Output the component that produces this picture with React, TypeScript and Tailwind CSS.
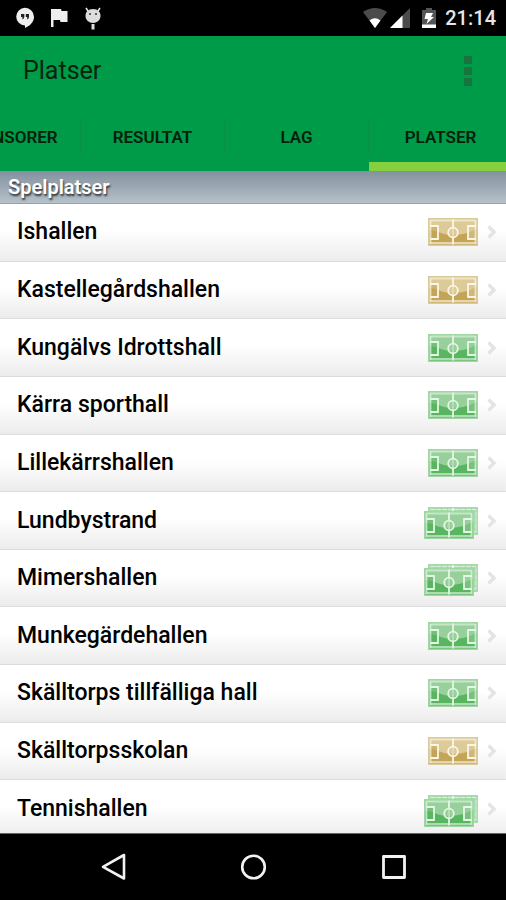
import React, { useState } from 'react';

type Surface = 'gravel' | 'grass' | 'multi';

interface Venue {
  id: number;
  name: string;
  surface: Surface;
}

const tabs = ['Sponsorer', 'Resultat', 'Lag', 'Platser'];

const venues: Venue[] = [
  { id: 1, name: 'Ishallen', surface: 'gravel' },
  { id: 2, name: 'Kastellegårdshallen', surface: 'gravel' },
  { id: 3, name: 'Kungälvs Idrottshall', surface: 'grass' },
  { id: 4, name: 'Kärra sporthall', surface: 'grass' },
  { id: 5, name: 'Lillekärrshallen', surface: 'grass' },
  { id: 6, name: 'Lundbystrand', surface: 'multi' },
  { id: 7, name: 'Mimershallen', surface: 'multi' },
  { id: 8, name: 'Munkegärdehallen', surface: 'grass' },
  { id: 9, name: 'Skälltorps tillfälliga hall', surface: 'grass' },
  { id: 10, name: 'Skälltorpsskolan', surface: 'gravel' },
  { id: 11, name: 'Tennishallen', surface: 'multi' },
];

const pitchColors = {
  gravel: { light: '#dccb98', dark: '#c4a558', edge: '#dac999', line: '#fbf6e6' },
  grass: { light: '#97d09b', dark: '#5ab561', edge: '#9fd6a3', line: '#e4f6e5' },
};

// One football pitch, 50x28
const Pitch: React.FC<{ kind: 'gravel' | 'grass' }> = ({ kind }) => {
  const c = pitchColors[kind];
  return (
    <g>
      <rect width="50" height="28" fill={c.edge} />
      <rect x="1.5" y="1.5" width="47" height="25" fill={c.light} />
      <path d="M1.5 12 C9 12 14 17 24 17 C35 17 42 14 48.5 11 V26.5 H1.5 Z" fill={c.dark} />
      <path d="M2.5 8 H10 V21 H2.5 Z" fill={c.dark} fillOpacity="0.6" />
      <path d="M40 8 H48 V21 H40 Z" fill={c.light} fillOpacity="0.5" />
      <g fill="none" stroke={c.line} strokeWidth="1.8">
        <path d="M2.5 2.5 H47.5 M2.5 25 H47.5" strokeOpacity="0.6" />
        <path d="M2.5 2 V26 M47.5 2 V26" strokeOpacity="0.7" />
        <path d="M25 1.5 V26.5 M2.5 8 H10 V21 H2.5 M48 8 H40 V21 H48" />
        <circle cx="25" cy="14.5" r="4.8" fill={c.light} fillOpacity="0.6" />
      </g>
    </g>
  );
};

const VenueIcon: React.FC<{ surface: Surface }> = ({ surface }) => {
  if (surface === 'multi') {
    return (
      <svg viewBox="0 0 54 38" className="h-[38px] w-[54px]" aria-hidden="true">
        <g transform="translate(4 5)">
          <rect width="50" height="28" fill="#a9daac" />
          <path d="M2 2.5 H48 V25 H42" fill="none" stroke="#e4f6e5" strokeOpacity="0.8" strokeDasharray="5 1" />
          <path d="M25 1 V5" stroke="#e4f6e5" strokeWidth="2" />
        </g>
        <g transform="translate(0 9)">
          <Pitch kind="grass" />
        </g>
      </svg>
    );
  }
  return (
    <svg viewBox="0 0 50 28" className="h-7 w-[50px]" aria-hidden="true">
      <Pitch kind={surface} />
    </svg>
  );
};

const StatusBar: React.FC = () => (
  <div className="flex h-9 shrink-0 items-center justify-between bg-black pl-4 pr-[10px] text-[#e6e6e6]">
    <div className="flex items-center gap-4">
      {/* Hangouts */}
      <svg viewBox="0 0 18 22" className="h-[22px] w-[18px]">
        <path d="M9 0.8 A8.8 8.8 0 0 0 9 18.4 V21 C14 19 18 15 18 9.8 A9 9 0 0 0 9 0.8 Z" fill="#eee" />
        <path d="M5 7 H8.3 V10 Q8.2 12 6.4 12.4 V10 H5 Z M9.8 7 H13 V10 Q13 12 11.2 12.4 V10 H9.8 Z" fill="#222" />
      </svg>
      <svg viewBox="0 0 18 22" className="h-[22px] w-[18px]">
        <path d="M1 2 H11 L11.6 4 H17.5 V15 H10.5 L10 13 H3.5 V20 H1 Z" fill="#eee" />
      </svg>
      {/* Debug bug */}
      <svg viewBox="0 0 18 24" className="h-6 w-[18px]">
        <path d="M4 5 L2 2 M14 5 L16 2" stroke="#eee" strokeWidth="1.5" />
        <path d="M9 3 C14 3 16.5 6 16.5 10 C16.5 14 13 17 9 17 C5 17 1.5 14 1.5 10 C1.5 6 4 3 9 3 Z" fill="#ddd" />
        <circle cx="6" cy="8" r="1" fill="#333" />
        <circle cx="12" cy="8" r="1" fill="#333" />
        <path d="M9 18 V23.5" stroke="#ddd" strokeWidth="3" />
      </svg>
    </div>
    <div className="flex items-center">
      <svg viewBox="0 0 24 20" className="h-5 w-6">
        <path d="M0 4 Q12 -4 24 4 L12 20 Z" fill="#4b4b4b" />
        <path d="M6.5 12.5 Q12 8 17.5 12.5 L12 20 Z" fill="#fff" />
      </svg>
      <svg viewBox="0 0 20 20" className="ml-[3px] h-5 w-5">
        <path d="M20 0 V20 H0 Z" fill="#4b4b4b" />
        <path d="M12.5 7.5 V20 H0 Z" fill="#fff" />
      </svg>
      <svg viewBox="0 0 14 20" className="ml-3 h-5 w-[14px]">
        <path d="M4 0 H10 V2 H14 V20 H0 V2 H4 Z" fill="#555" />
        <path d="M0 16.5 H14 V20 H0 Z" fill="#fff" />
        <path d="M4 5 H11 L9 9 H12 L4.5 16 L6 11 H2.5 Z" fill="#fff" />
      </svg>
      <span className="ml-[9px] text-xl font-medium leading-6">21:14</span>
    </div>
  </div>
);

const App: React.FC = () => {
  const [activeTab, setActiveTab] = useState('Platser');

  return (
    <div className="flex h-screen flex-col overflow-hidden bg-white font-[Roboto,sans-serif] text-black">
      <StatusBar />

      <header className="shrink-0 overflow-hidden bg-[#009b48]">
        <div className="flex h-[70px] items-center justify-between pl-[23px] pr-[34px]">
          <h1 className="text-[25px] text-[#06240f]">Platser</h1>
          <button aria-label="Fler alternativ" className="flex flex-col gap-[3px]">
            <span className="size-2 bg-[#16743c]" />
            <span className="size-2 bg-[#16743c]" />
            <span className="size-2 bg-[#16743c]" />
          </button>
        </div>
        <nav className="-mr-[7px] flex h-[65px] justify-end">
          {tabs.map((tab) => (
            <button
              key={tab}
              onClick={() => setActiveTab(tab)}
              className={`flex w-36 shrink-0 flex-col border-b-[9px] pt-4 text-[17px] font-semibold uppercase text-[#041f0c]
                ${activeTab === tab ? 'border-[#86d03f]' : 'border-[#009b48]'}
              `}
            >
              <span className="flex h-8 w-full items-center justify-center border-r border-[#079041]">{tab}</span>
            </button>
          ))}
        </nav>
      </header>

      <main className="flex min-h-0 flex-1 flex-col overflow-hidden">
        <h2 className="h-[33px] shrink-0 border-b border-t border-b-[#98a1a9] border-t-[#87938e] bg-linear-to-b from-[#8593a0] to-[#b5c1ca] pl-2 text-xl font-semibold leading-[30px] text-white [text-shadow:1px_2px_2px_#333]">
          Spelplatser
        </h2>
        <ul className="-mb-[5px] flex flex-1 flex-col">
          {venues.map((venue) => (
            <li key={venue.id} className="flex min-h-0 flex-1 border-b border-[#dcdcdc]">
              <button className="flex w-full items-center bg-linear-to-b from-white from-45% to-[#ececec] pl-[17px] pr-[10px] text-left">
                <span className="flex-1 text-[23px] font-medium leading-7">{venue.name}</span>
                <VenueIcon surface={venue.surface} />
                <svg viewBox="0 0 9 14" className="ml-[9px] h-[14px] w-[9px]" fill="none">
                  <path d="M1.5 1.5 L7 7 L1.5 12.5" stroke="#e4e4e4" strokeWidth="3.4" />
                </svg>
              </button>
            </li>
          ))}
        </ul>
      </main>

      <footer className="flex h-[67px] shrink-0 items-center justify-center gap-28 border-t border-[#666] bg-black">
        <button aria-label="Tillbaka">
          <svg viewBox="0 0 28 28" className="size-7" fill="none" stroke="#f2f2f2" strokeWidth="2.6" strokeLinejoin="round">
            <path d="M25 2 V25.5 L4 13.8 Z" />
          </svg>
        </button>
        <button aria-label="Hem">
          <svg viewBox="0 0 28 28" className="size-7" fill="none" stroke="#f2f2f2" strokeWidth="2.6">
            <circle cx="14.5" cy="14" r="11.3" />
          </svg>
        </button>
        <button aria-label="Översikt">
          <svg viewBox="0 0 28 28" className="size-7" fill="none" stroke="#f2f2f2" strokeWidth="2.8" strokeLinejoin="round">
            <rect x="4.5" y="3.5" width="21" height="21" />
          </svg>
        </button>
      </footer>
    </div>
  );
};

export default App;
